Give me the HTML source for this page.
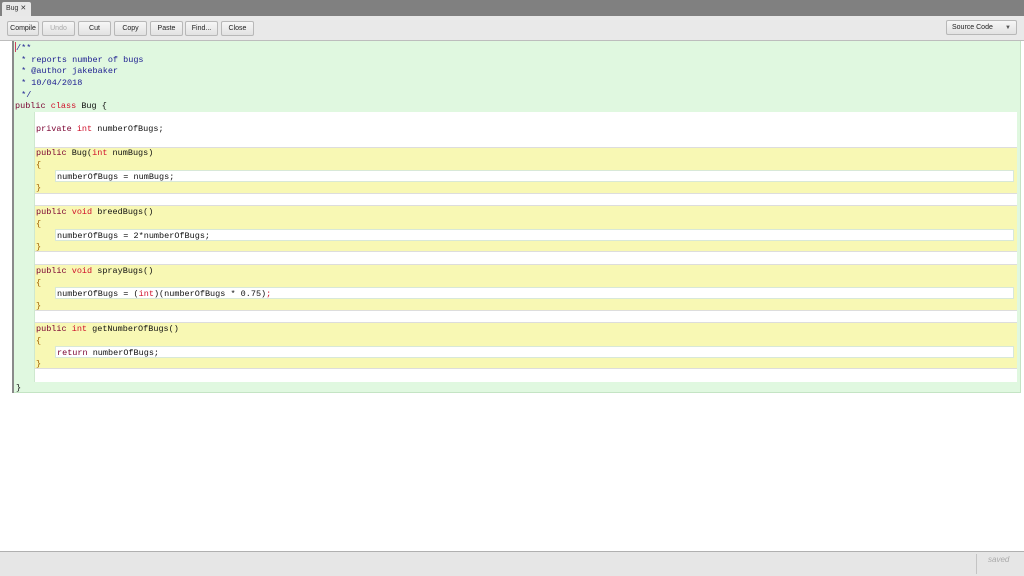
<!DOCTYPE html>
<html><head><meta charset="utf-8"><style>
*{margin:0;padding:0;box-sizing:border-box}
body{width:1024px;height:576px;position:relative;background:#fff;font-family:"Liberation Sans",sans-serif;overflow:hidden}
.abs{position:absolute}
.btn{position:absolute;top:21px;height:15px;border:1px solid #b8b8b8;border-radius:2px;background:linear-gradient(#f6f6f6,#e2e2e2);font-size:7px;color:#222;text-align:center;line-height:14px}
.code{position:absolute;font-family:"Liberation Mono",monospace;font-size:8.5px;line-height:12px;white-space:pre;color:#111}
.c{color:#1c1c90}.k{color:#7a0030}.r{color:#d0102a}.n{color:#a06000}
</style></head><body>
<div class="abs" style="left:0;top:0;width:1024px;height:16px;background:#808080"></div>
<div class="abs" style="left:2px;top:2px;width:29px;height:14px;background:#e8e8e8;border-radius:2px 2px 0 0;font-size:7px;color:#333;padding:2px 0 0 4px">Bug ✕</div>
<div class="abs" style="left:0;top:16px;width:1024px;height:25px;background:#e9e9e9;border-bottom:1px solid #bdbdbd"></div>
<div class="btn" style="left:7px;width:32px">Compile</div>
<div class="btn" style="left:42px;width:33px;color:#aaa">Undo</div>
<div class="btn" style="left:78px;width:33px">Cut</div>
<div class="btn" style="left:114px;width:33px">Copy</div>
<div class="btn" style="left:150px;width:33px">Paste</div>
<div class="btn" style="left:185px;width:33px">Find...</div>
<div class="btn" style="left:221px;width:33px">Close</div>
<div class="btn" style="left:946px;width:71px;text-align:left;padding-left:5px;top:20px">Source Code<span style="position:absolute;right:5px;font-size:6px;color:#555">▼</span></div>

<div class="abs" style="left:12px;top:41px;width:2px;height:352px;background:#8a8a8a"></div>
<div class="abs" style="left:14px;top:41px;width:1007px;height:352px;background:#e0f8e0;border-right:1px solid #c4e4c4;border-bottom:1px solid #c4e4c4"></div>
<div class="abs" style="left:34px;top:112px;width:983px;height:270px;background:#fff;border-left:1px solid #cfe8cf"></div>
<div class="abs" style="left:35px;top:147px;width:982px;height:47px;background:#f8f8b4;border-top:1px solid #ddd;border-bottom:1px solid #ddd"></div>
<div class="abs" style="left:35px;top:205px;width:982px;height:47px;background:#f8f8b4;border-top:1px solid #ddd;border-bottom:1px solid #ddd"></div>
<div class="abs" style="left:35px;top:264px;width:982px;height:47px;background:#f8f8b4;border-top:1px solid #ddd;border-bottom:1px solid #ddd"></div>
<div class="abs" style="left:35px;top:322px;width:982px;height:47px;background:#f8f8b4;border-top:1px solid #ddd;border-bottom:1px solid #ddd"></div>
<div class="abs" style="left:55px;top:170px;width:959px;height:12px;background:#fff;border:1px solid #d8e8d8"></div>
<div class="abs" style="left:55px;top:229px;width:959px;height:12px;background:#fff;border:1px solid #d8e8d8"></div>
<div class="abs" style="left:55px;top:287px;width:959px;height:12px;background:#fff;border:1px solid #d8e8d8"></div>
<div class="abs" style="left:55px;top:346px;width:959px;height:12px;background:#fff;border:1px solid #d8e8d8"></div>
<div class="abs" style="left:15px;top:42px;width:1px;height:10px;background:#d04060"></div>

<div class="code c" style="left:16px;top:42px">/**</div>
<div class="code c" style="left:16px;top:54px"> * reports number of bugs</div>
<div class="code c" style="left:16px;top:65px"> * @author jakebaker</div>
<div class="code c" style="left:16px;top:77px"> * 10/04/2018</div>
<div class="code c" style="left:16px;top:89px"> */</div>
<div class="code" style="left:15px;top:100px"><span class="k">public</span> <span class="r">class</span> Bug {</div>
<div class="code" style="left:36px;top:123px"><span class="k">private</span> <span class="r">int</span> numberOfBugs;</div>
<div class="code" style="left:36px;top:147px"><span class="k">public</span> Bug(<span class="r">int</span> numBugs)</div>
<div class="code n" style="left:36px;top:159px">{</div>
<div class="code" style="left:57px;top:171px">numberOfBugs = numBugs;</div>
<div class="code n" style="left:36px;top:182px">}</div>
<div class="code" style="left:36px;top:206px"><span class="k">public</span> <span class="r">void</span> breedBugs()</div>
<div class="code n" style="left:36px;top:218px">{</div>
<div class="code" style="left:57px;top:230px">numberOfBugs = 2*numberOfBugs;</div>
<div class="code n" style="left:36px;top:241px">}</div>
<div class="code" style="left:36px;top:265px"><span class="k">public</span> <span class="r">void</span> sprayBugs()</div>
<div class="code n" style="left:36px;top:277px">{</div>
<div class="code" style="left:57px;top:288px">numberOfBugs = (<span class="r">int</span>)(numberOfBugs * 0.75)<span class="r">;</span></div>
<div class="code n" style="left:36px;top:300px">}</div>
<div class="code" style="left:36px;top:323px"><span class="k">public</span> <span class="r">int</span> getNumberOfBugs()</div>
<div class="code n" style="left:36px;top:335px">{</div>
<div class="code" style="left:57px;top:347px"><span class="k">return</span> numberOfBugs;</div>
<div class="code n" style="left:36px;top:358px">}</div>
<div class="code" style="left:16px;top:382px">}</div>

<div class="abs" style="left:0;top:551px;width:1024px;height:25px;background:#e6e6e6;border-top:1px solid #b0b0b0"></div>
<div class="abs" style="left:976px;top:554px;width:1px;height:20px;background:#c4c4c4"></div>
<div class="abs" style="left:988px;top:555px;font-size:8px;font-style:italic;color:#aaa">saved</div>
</body></html>
